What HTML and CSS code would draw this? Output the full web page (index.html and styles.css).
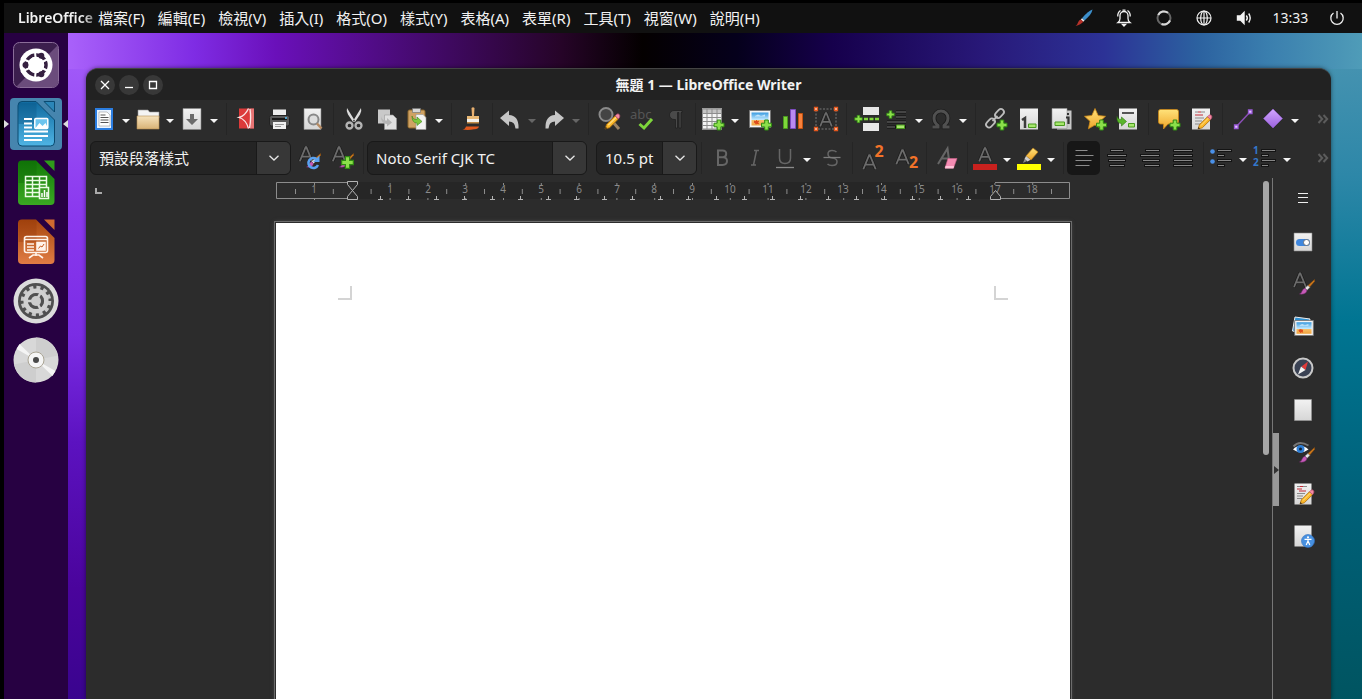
FILE: index.html
```html
<!DOCTYPE html>
<html lang="zh-Hant">
<head>
<meta charset="utf-8">
<title>無題 1 — LibreOffice Writer</title>
<link rel="stylesheet" href="styles.css">
</head>
<body>
<svg class="defs" aria-hidden="true">
  <defs>
    <linearGradient id="paper" x1="0" y1="0" x2="0" y2="1"><stop offset="0" stop-color="#f2f2f2"/><stop offset="1" stop-color="#d6d6d6"/></linearGradient>
    <linearGradient id="sky" x1="0" y1="0" x2="0" y2="1"><stop offset="0" stop-color="#3a9be0"/><stop offset=".55" stop-color="#bfe8ff"/><stop offset=".6" stop-color="#f6c06a"/><stop offset="1" stop-color="#f2a33c"/></linearGradient>
    <linearGradient id="gold" x1="0" y1="0" x2="0" y2="1"><stop offset="0" stop-color="#ffe27a"/><stop offset="1" stop-color="#efa62a"/></linearGradient>
    <linearGradient id="folder" x1="0" y1="0" x2="0" y2="1"><stop offset="0" stop-color="#f6e3bd"/><stop offset="1" stop-color="#d8b276"/></linearGradient>
    <linearGradient id="writer" x1="0" y1="0" x2="0" y2="1"><stop offset="0" stop-color="#0f6a9f"/><stop offset="1" stop-color="#4fb4e4"/></linearGradient>
    <linearGradient id="calc" x1="0" y1="0" x2="0" y2="1"><stop offset="0" stop-color="#127a08"/><stop offset="1" stop-color="#3aa822"/></linearGradient>
    <linearGradient id="impress" x1="0" y1="0" x2="0" y2="1"><stop offset="0" stop-color="#a8480f"/><stop offset="1" stop-color="#e07c44"/></linearGradient>
    <linearGradient id="violet" x1="0" y1="0" x2="0" y2="1"><stop offset="0" stop-color="#d3a6ff"/><stop offset="1" stop-color="#9a62dd"/></linearGradient>
    <symbol id="plus" viewBox="0 0 12 12"><path d="M4.200 1h3.600v3.200H11v3.600H7.800V11H4.200V7.800H1V4.200h3.200z" fill="#8be04a" stroke="#2f8a12"/></symbol>
    <symbol id="pencil" viewBox="0 0 16 16"><path d="M1 15l1.400-4.200L10.500 2.700l3 3L5.300 13.800z" fill="#fbb829" stroke="#a96a0a" stroke-width=".8"/><path d="M4 11.500l7.500-7.500" stroke="#ffe08a"/><path d="M10.500 2.700L12 1.200q1.300-.9 2.300.2t.4 2.600L13.500 5.700z" fill="#f48aa4" stroke="#b04a68" stroke-width=".7"/><path d="M1 15l.6-2 1.400 1.400z" fill="#222"/></symbol>
    <symbol id="brush" viewBox="0 0 16 16"><path d="M15.500.500L9 6.500l1.500 1.700L15.500 2.500z" fill="#d07a1c" stroke="#8a4c0c" stroke-width=".5"/><path d="M9 6.500L6 9l2 2.200 2.800-2.800z" fill="#e8e8e8" stroke="#888" stroke-width=".5"/><path d="M6 9.200q-2.200.6-3 3Q2.400 14.500.500 15q4.500.6 6-1 1.400-1.300 1.300-2.800z" fill="#c65bb8" stroke="#7b2f74" stroke-width=".5"/></symbol>
    <symbol id="picture" viewBox="0 0 22 18"><path d="M.500.500h21v17H.500z" fill="#f5f5f5" stroke="#777"/><path d="M2.500 2.500h17v13h-17z" fill="url(#sky)"/><path d="M6 6l3-1.500 3 1.500 4-1.500v2H6z" fill="#e8f7ff" opacity=".7"/><path d="M5.500 11l1.200.6.8-1.300.8 1.300 1.300-.4-.8 1.300.8 1.200-1.700-.4-.8.9-.5-1.200-1.200-.4z" fill="#df4a1c" stroke="#df4a1c"/></symbol>
    <symbol id="letterA" viewBox="0 0 20 22"><path d="M1.500 21L9.500 1.500h1L18.500 21M4.500 14.500h11" fill="none" stroke="#1d1d1d" stroke-width="4.500"/><path d="M1.500 21L9.500 1.500h1L18.500 21M4.500 14.500h11" fill="none" stroke="#6c6c6c" stroke-width="2.500"/></symbol>
    <symbol id="chevron" viewBox="0 0 12 8"><path d="M1.500 1.800L6 6l4.500-4.200" fill="none" stroke="#e6e6e6" stroke-width="1.300"/></symbol>
    <symbol id="more" viewBox="0 0 12 12"><path d="M1.500 2l3.700 4-3.700 4M6.500 2l3.700 4-3.700 4" fill="none" stroke="#5c5c5c" stroke-width="2"/></symbol>
    <pattern id="halves" x="19" width="37.8" height="18" patternUnits="userSpaceOnUse"><path d="M.500 7v5" stroke="#8c8c8c"/></pattern>
    <pattern id="marks" x="38" width="37.8" height="18" patternUnits="userSpaceOnUse"><path d="M.500 1v2M.500 16v2" stroke="#8c8c8c"/></pattern>
    <pattern id="tabs" x="102" width="28" height="20" patternUnits="userSpaceOnUse"><path d="M2.500 14v4M0 17.500h5" stroke="#b4b4b4"/></pattern>
  </defs>
</svg>

<header class="topbar">
  <strong class="app-name">LibreOffice</strong>
  <nav class="menus" aria-label="選單">
    <button>檔案(F)</button><button>編輯(E)</button><button>檢視(V)</button><button>插入(I)</button><button>格式(O)</button><button>樣式(Y)</button><button>表格(A)</button><button>表單(R)</button><button>工具(T)</button><button>視窗(W)</button><button>說明(H)</button>
  </nav>
  <div class="tray">
    <button aria-label="畫筆"><svg viewBox="0 0 20 20"><path d="M18.500 1.500q-.5 4.500-8 11l-2.500-2.300Q14.500 2.500 18.500 1.500z" fill="#3d8fcb"/><path d="M8 10.200l2.500 2.300-1.200 1.300L6.800 11.500z" fill="#e8e8e8"/><path d="M6.800 11.400l2.500 2.300Q7 16.500 1.500 18q2-1.500 2.500-3.600.8-2.500 2.800-3z" fill="#b8322a"/></svg></button>
    <button aria-label="通知"><svg viewBox="0 0 20 20" fill="none" stroke="#f2f2f2" stroke-width="1.300"><path d="M4 14.500q2-1.500 2-4V7.500a4 4 0 0 1 8 0v3q0 2.500 2 4z"/><path d="M8.500 16.500h3L10 18z" fill="#f2f2f2"/><path d="M3.800 8.500q-.3-4 2.700-6M16.200 8.500q.3-4-2.700-6M8.500 2.200h3"/></svg></button>
    <button aria-label="進度"><svg viewBox="0 0 20 20" fill="none" stroke-width="2"><circle cx="10" cy="10" r="6.500" stroke="#666"/><path d="M4.200 7a6.500 6.500 0 0 1 9.800-2.200M16 12.500a6.500 6.500 0 0 1-8.500 3.500" stroke="#d8d8d8"/></svg></button>
    <button aria-label="網路"><svg viewBox="0 0 20 20" fill="none" stroke="#f2f2f2" stroke-width="1.200"><circle cx="10" cy="10" r="7"/><ellipse cx="10" cy="10" rx="3.300" ry="7"/><path d="M10 3v14M3 10h14"/></svg></button>
    <button aria-label="音量"><svg viewBox="0 0 20 20" fill="none" stroke="#f2f2f2" stroke-width="1.400"><path d="M3.500 8h3l3.500-3.500v11L6.500 12h-3z" fill="#f2f2f2"/><path d="M12.300 7.500q2 2.500 0 5M14.700 5.500q3 4.500 0 9"/></svg></button>
    <button class="clock">13:33</button>
    <button aria-label="電源"><svg viewBox="0 0 20 20" fill="none" stroke="#f2f2f2" stroke-width="1.300"><path d="M6.500 5a6.200 6.200 0 1 0 7 0M10 3v7.500"/></svg></button>
  </div>
</header>

<div class="desktop">
  <nav class="dock" aria-label="啟動列">
    <button aria-label="應用程式"><svg viewBox="0 0 46 46"><rect x=".5" y=".5" width="45" height="45" rx="6" fill="#3c1f4e" stroke="#8a6d99"/><path d="M45 3v37q0 5-5 5H3z" fill="#6b4c7c"/><circle cx="23" cy="23" r="16.500" fill="#fff"/><circle cx="23" cy="23" r="10" fill="none" stroke="#352040" stroke-width="3.500"/><path d="M23 23L8 16M23 23L8 30M23 23L22 9M23 23l12-6M23 23l-1 14M23 23l12 6" stroke="#fff" stroke-width="2"/><circle cx="23" cy="23" r="8.200" fill="#fff"/><circle cx="12.500" cy="23" r="3" fill="#352040"/><circle cx="28.300" cy="13.800" r="3" fill="#352040"/><circle cx="28.300" cy="32.200" r="3" fill="#352040"/></svg></button>
    <button class="active" aria-label="LibreOffice Writer"><svg viewBox="0 0 46 46"><path d="M9 .500h14L41.500 19v22q0 4-4 4H9q-4 0-4-4V4.500q0-4 4-4z" fill="url(#writer)" stroke="#0b4a70"/><path d="M5.500 2h18v21h-18z" fill="#074d7c" opacity=".3"/><path d="M31 .500h10.500V11z" fill="#2b86b8" stroke="#0b4a70"/><path d="M11 18h8M11 22.500h8M11 26.500h8M11 30.500h24M11 35h24M11 39h18" stroke="#fff" stroke-width="2"/><rect x="21.800" y="17.500" width="13" height="10" rx="1" fill="#6cc4ee" stroke="#fff" stroke-width="1.500"/><path d="M22.500 27l4-5 3 3 3-3 2.500 5z" fill="#fff"/></svg></button>
    <button aria-label="LibreOffice Calc"><svg viewBox="0 0 46 46"><path d="M9 .500h14L41.500 19v22q0 4-4 4H9q-4 0-4-4V4.500q0-4 4-4z" fill="url(#calc)"/><path d="M5.500 1h18v22h-18z" fill="#085c04" opacity=".25"/><path d="M31 .500h10.500V11z" fill="#2f9c1a"/><g fill="none" stroke="#eafbe4" stroke-width="1.500"><path d="M12.500 16.500h21v20h-21zM12.500 20.500h21M12.500 24.500h21M12.500 28.500h21M12.500 32.500h21M19.500 16.500v20M26.500 16.500v20"/><path d="M26.500 27.500h9v11h-9z" fill="#3a9c24"/></g><path d="M29 37v-4M31.500 37v-7M34 37v-5" stroke="#fff" stroke-width="1.500"/></svg></button>
    <button aria-label="LibreOffice Impress"><svg viewBox="0 0 46 46"><path d="M9 .500h14L41.500 19v22q0 4-4 4H9q-4 0-4-4V4.500q0-4 4-4z" fill="url(#impress)"/><path d="M5.500 1h18v22h-18z" fill="#862c05" opacity=".25"/><path d="M31 .500h10.500V11z" fill="#d06a30"/><g fill="none" stroke="#fff3ea" stroke-width="1.600"><rect x="11.500" y="17.500" width="23" height="16" rx="2"/><path d="M11 20.500h24M14 25h7M14 28h7M14 31h7M23 34v3M16 39l4-3h6l4 3"/><rect x="24" y="23.500" width="8" height="7.500" fill="#fff3ea"/></g><path d="M25.500 29.500l2-2.500 1.500 1 2-3" fill="none" stroke="#c85c20"/></svg></button>
    <button aria-label="設定"><svg viewBox="0 0 46 46"><circle cx="23" cy="23" r="22.500" fill="#dcdcdc"/><circle cx="23" cy="23" r="18" fill="#505050"/><circle cx="23" cy="23" r="13.500" fill="none" stroke="#c9c9c9" stroke-width="3.500" stroke-dasharray="4 3.070"/><circle cx="23" cy="23" r="10.300" fill="none" stroke="#d0d0d0" stroke-width="4.500"/><circle cx="23" cy="23" r="7.800" fill="#505050"/><path d="M23 23H14M23 23l4.500-8M23 23l4.500 8" stroke="#d0d0d0" stroke-width="2.500"/><circle cx="23" cy="23" r="5" fill="#ccc"/></svg></button>
    <button aria-label="光碟"><svg viewBox="0 0 46 46"><circle cx="23" cy="23" r="22.500" fill="#d8d8d8"/><path d="M23 23L23 .500a22.500 22.500 0 0 1 22 18zM23 23v22.500a22.500 22.500 0 0 1-22-18z" fill="#cecece"/><path d="M23 23L3.500 12l3-5zM23 23l19.500 11-3 5z" fill="#f4f4f4"/><circle cx="23" cy="23" r="8" fill="#f5f5f5" stroke="#aaa494"/><circle cx="23" cy="23" r="3" fill="#494949"/></svg></button>
  </nav>

  <main class="window">
    <div class="titlebar">
      <div class="controls">
        <button aria-label="關閉"><svg viewBox="0 0 20 20"><path d="M6 6l8 8M14 6l-8 8"/></svg></button>
        <button aria-label="最小化"><svg viewBox="0 0 20 20"><path d="M6 12.500h8"/></svg></button>
        <button aria-label="最大化"><svg viewBox="0 0 20 20"><path d="M6.500 6.500h7v7h-7z"/></svg></button>
      </div>
      <h1>無題 1 — LibreOffice Writer</h1>
    </div>

    <div class="toolbar standard">
      <button class="tool split" aria-label="開新檔案"><svg viewBox="0 0 24 24"><path d="M4 2h16v20H4z" fill="#e9f3ff" stroke="#2b7de0" stroke-width="2"/><path d="M7 5h8l3 3v11H7z" fill="#fff" stroke="#999" stroke-width=".6"/><path d="M8.500 8h5M8.500 10.500h8M8.500 13h8M8.500 15.500h8" stroke="#555"/></svg></button><button class="drop" aria-label="範本"></button>
      <button class="tool split" aria-label="開啟舊檔"><svg viewBox="0 0 24 24"><path d="M2 3h10l1.500 2H23v6H2z" fill="#f4f4f4" stroke="#999" stroke-width=".6"/><path d="M1 9h22v13H1z" fill="url(#folder)" stroke="#b58d50" stroke-width=".6"/></svg></button><button class="drop" aria-label="最近的檔案"></button>
      <button class="tool split" aria-label="儲存"><svg viewBox="0 0 24 24"><path d="M3 1.500h18v21H3z" fill="url(#paper)" stroke="#888" stroke-width=".6"/><path d="M10 7h4v5h4l-6 6-6-6h4z" fill="#6b6b6b"/></svg></button><button class="drop" aria-label="另存新檔"></button>
      <i class="sep"></i>
      <button class="tool" aria-label="匯出為 PDF"><svg viewBox="0 0 24 24"><path d="M4 1.500h15v20H4z" fill="#dc3a3a"/><path d="M14.500 1.500H19v20h-4z" fill="#ee9a9a" opacity=".6"/><path d="M13.500 1.500Q10 9 4 10.500q7 2 9.500 11M15 2q1.500 9-.5 19" fill="none" stroke="#fbe6e6" stroke-width="1.300"/></svg></button>
      <button class="tool" aria-label="列印"><svg viewBox="0 0 24 24"><path d="M5 2.500h13v9H5z" fill="#ececec"/><rect x="1.500" y="8.500" width="20" height="10.500" rx="2" fill="#585858" stroke="#222"/><path d="M4 12h15" stroke="#181818" stroke-width="2"/><path d="M17 11h2" stroke="#5dc8ff" stroke-width="1.500"/><path d="M5 15h13v7H5z" fill="#f0f0f0"/><path d="M7 17.500h9M7 19.500h6" stroke="#999"/></svg></button>
      <button class="tool" aria-label="預覽列印"><svg viewBox="0 0 24 24"><path d="M3 1.500h17v21H3z" fill="url(#paper)" stroke="#888" stroke-width=".6"/><circle cx="12.500" cy="12.500" r="5" fill="#ddd" stroke="#888" stroke-width="2"/><path d="M16 16.500l4.500 5" stroke="#b78b62" stroke-width="2.500"/></svg></button>
      <i class="sep"></i>
      <button class="tool" aria-label="剪下"><svg viewBox="0 0 24 24"><path d="M5 1q-1 3 1 6.500L11 15l2-1zM19 1q1 3-1 6.500L13 15l-2-1z" fill="#dcdcdc"/><g fill="none" stroke="#b4b4b4" stroke-width="2.300"><circle cx="7.500" cy="18.500" r="3"/><circle cx="16.500" cy="18.500" r="3"/></g></svg></button>
      <button class="tool" aria-label="複製"><svg viewBox="0 0 24 24"><path d="M3 2.500h12v14H3z" fill="#c9c9c9"/><path d="M9.500 8H18l3.500 3.500v11h-12z" fill="#e0e0e0" stroke="#999" stroke-width=".6"/><path d="M6 9q1 5 6 4.500V11l5 4.500-5 4V17q-6 0-6-8z" fill="#b4b4b4"/></svg></button>
      <button class="tool split" aria-label="貼上"><svg viewBox="0 0 24 24"><rect x="3" y="3" width="17" height="18" rx="1.500" fill="#cfa263" stroke="#8b6428"/><path d="M7.500 1.500h8v4h-8z" fill="#d8d8d8" stroke="#777" stroke-width=".7"/><path d="M11 7.500h7l3 3V22.500H11z" fill="#f2f2f2" stroke="#999" stroke-width=".6"/><path d="M7 9q1 4 5 3.500V10l5 4.500-5 4V16q-5 0-5-7z" fill="#7cc83c" stroke="#3e861a" stroke-width=".6"/></svg></button><button class="drop" aria-label="貼上選項"></button>
      <i class="sep"></i>
      <button class="tool" aria-label="複製格式"><svg viewBox="0 0 24 24"><path d="M11.500 1q1.500-1.500 3 0L14 9h-2z" fill="#e8b070"/><path d="M7 9h12v4H7z" fill="#e8b875"/><path d="M7 12h12v3H7z" fill="#f3f0ea"/><path d="M7 15h12v1.500H7z" fill="#c08a46"/><path d="M2 22.500q3 .3 4-3h13q-1 3-5 2.700-5 1.200-12 .3z" fill="#e0581d"/></svg></button>
      <i class="sep"></i>
      <button class="tool split" aria-label="復原"><svg viewBox="0 0 24 24"><path d="M2 11l9-7.500v4.500q10 .5 9.500 13.500h-3Q17 14.500 11 14.500v4.500z" fill="#c6c6c6"/></svg></button><button class="drop off" aria-label="復原清單"></button>
      <button class="tool split" aria-label="取消復原"><svg viewBox="0 0 24 24"><path d="M22 11l-9-7.500v4.500Q3 8.500 3.500 21.500h3Q7 14.500 13 14.500v4.500z" fill="#c6c6c6"/></svg></button><button class="drop off" aria-label="取消復原清單"></button>
      <i class="sep"></i>
      <button class="tool" aria-label="尋找與取代"><svg viewBox="0 0 24 24"><circle cx="9" cy="7.500" r="6.500" fill="#444" stroke="#8a8a8a" stroke-width="2"/><path d="M15 14l7 8" stroke="#9a8264" stroke-width="3"/><use href="#pencil" x="7" y="6" width="17" height="17"/></svg></button>
      <button class="tool" aria-label="拼字檢查"><svg viewBox="0 0 24 24"><text x="0" y="12" class="glyph abc">abc</text><path d="M9.500 17l4.500 4 8-9" fill="none" stroke="#7ed63b" stroke-width="3"/></svg></button>
      <button class="tool" aria-label="格式化標記"><svg viewBox="0 0 24 24"><path d="M19 3.500H11a4.500 4.500 0 0 0 0 9h1.500V21h2V5.500H16V21h2V5.500h1z" fill="#4a4a4a" stroke="#1c1c1c" stroke-width=".7"/></svg></button>
      <i class="sep"></i>
      <button class="tool split" aria-label="插入表格"><svg viewBox="0 0 24 24"><path d="M1 1.500h20v21H1z" fill="#f4f4f4"/><path d="M1 1.500h20v5H1z" fill="#c4c4c4"/><path d="M1 2h20M1 6.500h20M1 10.500h20M1 14.500h20M1 18.500h20M1 22h20M1.500 2v20M6 2v20M11 2v20M16 2v20M20.500 2v20" stroke="#8d8d8d"/><use href="#plus" x="12" y="12" width="12" height="12"/></svg></button><button class="drop" aria-label="表格選項"></button>
      <button class="tool" aria-label="插入圖片"><svg viewBox="0 0 24 24"><use href="#picture" x="1" y="3" width="22" height="18"/><use href="#plus" x="12.500" y="12" width="12" height="12"/></svg></button>
      <button class="tool" aria-label="插入圖表"><svg viewBox="0 0 24 24"><path d="M2.500 9.500h4v12h-4z" fill="#7ed63b" stroke="#4a9a1e"/><path d="M9.500 2.500h5v19h-5z" fill="#b98af0" stroke="#7d4cc0"/><path d="M17.500 6.500h4v15h-4z" fill="#f8813c" stroke="#c4520f"/></svg></button>
      <button class="tool" aria-label="插入文字方塊"><svg viewBox="0 0 24 24"><path d="M2 2h20v20H2z" fill="none" stroke="#777" stroke-dasharray="2 1.500"/><use href="#letterA" x="5" y="5" width="14" height="15"/><path d="M.500.500h3v3h-3zM20.500.500h3v3h-3zM.500 20.500h3v3h-3zM20.500 20.500h3v3h-3z" fill="#ffd8c6" stroke="#e2571e" stroke-width="1.300"/></svg></button>
      <i class="sep"></i>
      <button class="tool" aria-label="插入分頁"><svg viewBox="0 0 24 24"><path d="M8 0h16v8H8zM8 16h16v8H8z" fill="#e8e8e8"/><path d="M9 12h15" stroke="#7ed63b" stroke-width="2.500" stroke-dasharray="4 1.500"/><use href="#plus" x="-1" y="7.500" width="9" height="9"/></svg></button>
      <button class="tool split" aria-label="插入欄位"><svg viewBox="0 0 24 24"><path d="M11 5h10M11 10h10M2 15h19M2 20h19" stroke="#111" stroke-width="3"/><path d="M11 5h10M11 10h10M2 15h19M2 20h8" stroke="#7a7a7a"/><path d="M11.500 18h8v3.500h-8z" fill="#a6e66d" stroke="#4a9a1e"/><use href="#plus" x="1" y="3" width="9" height="9"/></svg></button><button class="drop" aria-label="欄位選項"></button>
      <button class="tool split" aria-label="插入特殊字元"><svg viewBox="0 0 24 24"><path d="M3.500 20h5.500v-1.500Q5 15.500 5 11a7 7 0 0 1 14 0q0 4.500-4 7.500V20h5.500" fill="none" stroke="#1b1b1b" stroke-width="4.500"/><path d="M3.500 20h5.500v-1.500Q5 15.500 5 11a7 7 0 0 1 14 0q0 4.500-4 7.500V20h5.500" fill="none" stroke="#505050" stroke-width="3"/></svg></button><button class="drop" aria-label="特殊字元選項"></button>
      <i class="sep"></i>
      <button class="tool" aria-label="插入超連結"><svg viewBox="0 0 24 24"><g fill="none" stroke="#bdbdbd" stroke-width="1.800"><rect x="-5" y="-3" width="10" height="6" rx="3" transform="translate(15.500 6.500) rotate(-45)"/><rect x="-5" y="-3" width="10" height="6" rx="3" transform="translate(6.500 16) rotate(-45)"/><path d="M8.500 14l5-5"/></g><use href="#plus" x="12" y="12" width="12" height="12"/></svg></button>
      <button class="tool" aria-label="插入註腳"><svg viewBox="0 0 24 24"><path d="M3 1.500h18v21H3z" fill="url(#paper)"/><path d="M5 13l3-2v10" fill="none" stroke="#3b3b3b" stroke-width="2.500"/><path d="M11.500 17h7.500v3.500h-7.500z" fill="#a6e66d" stroke="#4a9a1e"/></svg></button>
      <button class="tool" aria-label="插入尾註"><svg viewBox="0 0 24 24"><path d="M7 3.500h14.500v19H7z" fill="#c8c8c8"/><path d="M2 1.500h15v20H2z" fill="url(#paper)" stroke="#999" stroke-width=".6"/><path d="M17 7h2M16 10.500h2.500V17" fill="none" stroke="#333" stroke-width="2.200"/><path d="M5 15h9.500v3.500H5z" fill="#a6e66d" stroke="#4a9a1e"/></svg></button>
      <button class="tool" aria-label="插入書籤"><svg viewBox="0 0 24 24"><path d="M12 1.500l3.200 7 7.300.8-5.500 5 1.600 7.500L12 18l-6.600 3.800L7 14.300l-5.500-5 7.300-.8z" fill="url(#gold)" stroke="#c98716" stroke-width=".8"/><use href="#plus" x="12.500" y="12" width="12" height="12"/></svg></button>
      <button class="tool" aria-label="插入交互參照"><svg viewBox="0 0 24 24"><path d="M3 1.500h18v21H3z" fill="url(#paper)"/><path d="M6 6h12" stroke="#555" stroke-width="2"/><path d="M12.500 16.500h6v3.500h-6z" fill="#a6e66d" stroke="#4a9a1e"/><path d="M1 9.500q1 3.500 4.500 3V10l5 4.500-5 4.500v-2.500Q.500 16.500 1 9.500z" fill="#5ab52c" stroke="#2f7a10" stroke-width=".6"/></svg></button>
      <i class="sep"></i>
      <button class="tool" aria-label="插入註解"><svg viewBox="0 0 24 24"><path d="M3.500 2.500h16q2 0 2 2V15q0 2-2 2H11l-4.500 5V17h-3q-2 0-2-2V4.500q0-2 2-2z" fill="url(#gold)" stroke="#c98716" stroke-width=".8"/><use href="#plus" x="12" y="12" width="12" height="12"/></svg></button>
      <button class="tool" aria-label="追蹤修訂"><svg viewBox="0 0 24 24"><path d="M2 1.500h18v21H2z" fill="url(#paper)"/><path d="M5 5h3M11 5h4M5 11h9M5 14h7M5 17h6" stroke="#8a8a8a"/><path d="M8 5h3M5 8h8" stroke="#c42a36" stroke-width="1.200"/><use href="#pencil" x="7" y="7" width="16" height="16"/></svg></button>
      <i class="sep"></i>
      <button class="tool" aria-label="插入線條"><svg viewBox="0 0 24 24"><path d="M5 20L20 4" stroke="#8c50b8" stroke-width="1.500"/><path d="M3.500 18h3.500v3.500H3.500zM17.500 3h3.500v3.500h-3.500z" fill="#e2c4ff" stroke="#9a5ad8" stroke-width="1.300"/></svg></button>
      <button class="tool split" aria-label="基本圖形"><svg viewBox="0 0 24 24"><path d="M12 2l9.500 9.500-9.500 9.500-9.500-9.500z" fill="url(#violet)" stroke="#9a62dd" stroke-width=".5"/></svg></button><button class="drop" aria-label="圖形選項"></button>
      <button class="overflow" aria-label="更多"><svg viewBox="0 0 12 12"><use href="#more"/></svg></button>
    </div>

    <div class="toolbar formatting">
      <div class="combo style"><select aria-label="段落樣式"><option>預設段落樣式</option></select><span class="arrow"><svg viewBox="0 0 12 8"><use href="#chevron"/></svg></span></div>
      <button class="tool" aria-label="更新樣式"><svg viewBox="0 0 24 24"><use href="#letterA" x="0" y="0" width="16" height="16"/><use href="#brush" x="8" y="7" width="15" height="15"/><path d="M18.500 13a5 5 0 1 0 1.500 6" fill="none" stroke="#5aa2f2" stroke-width="2.500"/><path d="M21.500 9.500v6.500H15z" fill="#5aa2f2"/></svg></button>
      <button class="tool" aria-label="新增樣式"><svg viewBox="0 0 24 24"><use href="#letterA" x="0" y="0" width="16" height="16"/><use href="#brush" x="8" y="7" width="15" height="15"/><use href="#plus" x="9.500" y="9.500" width="14" height="14"/></svg></button>
      <i class="sep"></i>
      <div class="combo font"><select aria-label="字型名稱"><option>Noto Serif CJK TC</option></select><span class="arrow"><svg viewBox="0 0 12 8"><use href="#chevron"/></svg></span></div>
      <div class="combo size"><select aria-label="字型大小"><option>10.5 pt</option></select><span class="arrow"><svg viewBox="0 0 12 8"><use href="#chevron"/></svg></span></div>
      <i class="sep"></i>
      <button class="tool" aria-label="粗體"><svg viewBox="0 0 24 24"><path d="M8 4.500v14.500h4.500q4.500-.3 4.500-4t-4-3.700q3.200-.3 3.200-3.500T12.500 4.500zM8 11.300h5" class="letter"/></svg></button>
      <button class="tool" aria-label="斜體"><svg viewBox="0 0 24 24"><path d="M11 4.500h5M8 19h5M13.500 4.500l-3 14.500" class="letter thin"/></svg></button>
      <button class="tool split" aria-label="底線"><svg viewBox="0 0 24 24"><path d="M6.500 3v9q0 5.500 5.500 5.500T17.500 12V3" class="letter thin"/><path d="M3 21.500h18" stroke="#8a8a8a" stroke-width="1.300"/></svg></button><button class="drop" aria-label="底線選項"></button>
      <button class="tool" aria-label="刪除線"><svg viewBox="0 0 24 24"><path d="M16.500 6q-1.500-1.500-4.500-1.500-4 0-4 3.500t4.500 4 4.500 3.700q0 3.800-5 3.800-3 0-4.500-1.500" class="letter thin"/><path d="M3.500 11.500h17" stroke="#7c7c7c" stroke-width="1.300"/></svg></button>
      <i class="sep"></i>
      <button class="tool" aria-label="上標"><svg viewBox="0 0 24 24"><use href="#letterA" x="1" y="8" width="15" height="16"/><text x="13.500" y="11" class="glyph digit">2</text></svg></button>
      <button class="tool" aria-label="下標"><svg viewBox="0 0 24 24"><use href="#letterA" x="1" y="3" width="15" height="16"/><text x="15" y="22" class="glyph digit">2</text></svg></button>
      <i class="sep"></i>
      <button class="tool" aria-label="清除格式"><svg viewBox="0 0 24 24"><path d="M3 18L12.500 2.500l2 15.500M6.500 12.500h8" class="letter"/><path d="M13 12.500h9L18.500 22H10z" fill="#f48bb2" stroke="#d2638d" stroke-width=".6"/><path d="M10.500 20h8.500l-.5 2.500H10z" fill="#ffc2d8"/></svg></button>
      <i class="sep"></i>
      <button class="tool split" aria-label="字型色彩"><svg viewBox="0 0 24 24"><use href="#letterA" x="5" y="1" width="14" height="15"/><path d="M0 18h24v6H0z" fill="#c9211e"/></svg></button><button class="drop" aria-label="字型色彩選項"></button>
      <button class="tool split" aria-label="醒目提示色彩"><svg viewBox="0 0 24 24"><path d="M16 2l5 4-7 8-5-4z" fill="url(#gold)" stroke="#b47a16" stroke-width=".7"/><path d="M9 10l4.500 3.800-3 1.700-3-2.500z" fill="#d0d0d0"/><path d="M7.500 13l2.500 2-4 2z" fill="#888"/><path d="M0 18h24v6H0z" fill="#ff0"/></svg></button><button class="drop" aria-label="醒目提示選項"></button>
      <i class="sep"></i>
      <button class="tool pressed" aria-label="靠左對齊" aria-pressed="true"><svg viewBox="0 0 24 24"><path d="M3.500 4.500h12M3.500 9.500h18M3.500 14.500h16M3.500 19.500h14" stroke="#8c8c8c"/></svg></button>
      <button class="tool" aria-label="置中對齊"><svg viewBox="0 0 24 24"><path d="M5 4.500h14M2 9.500h20M3 14.500h18M4 19.500h16" class="rule-back"/><path d="M6 4.500h12M3 9.500h18M4 14.500h16M5 19.500h14" class="rule"/></svg></button>
      <button class="tool" aria-label="靠右對齊"><svg viewBox="0 0 24 24"><path d="M7 4.500h15M2 9.500h20M4 14.500h18M6 19.500h16" class="rule-back"/><path d="M8 4.500h13M3 9.500h18M5 14.500h16M7 19.500h14" class="rule"/></svg></button>
      <button class="tool" aria-label="左右對齊"><svg viewBox="0 0 24 24"><path d="M2 4.500h20M2 9.500h20M2 14.500h20M2 19.500h20" class="rule-back"/><path d="M3 4.500h18M3 9.500h18M3 14.500h18M3 19.500h18" class="rule"/></svg></button>
      <i class="sep"></i>
      <button class="tool split" aria-label="項目符號"><svg viewBox="0 0 24 24"><path d="M8 4.500h15M8 9.500h8M8 14.500h15M8 19.500h8" class="rule-back"/><path d="M9 4.500h13M9 9.500h6M9 14.500h13M9 19.500h6" class="rule"/><circle cx="3.500" cy="5.500" r="2.300" fill="#4a90e8"/><circle cx="3.500" cy="15.500" r="2.300" fill="#4a90e8"/></svg></button><button class="drop" aria-label="項目符號選項"></button>
      <button class="tool split" aria-label="編號"><svg viewBox="0 0 24 24"><path d="M8 4.500h15M8 9.500h8M8 14.500h15M8 19.500h8" class="rule-back"/><path d="M9 4.500h13M9 9.500h6M9 14.500h13M9 19.500h6" class="rule"/><text x="0" y="8" class="glyph list">1</text><text x="0" y="20" class="glyph list">2</text></svg></button><button class="drop" aria-label="編號選項"></button>
      <button class="overflow" aria-label="更多"><svg viewBox="0 0 12 12"><use href="#more"/></svg></button>
    </div>

    <div class="workspace">
      <section class="document">
        <div class="ruler-row">
          <button class="tab-stop" aria-label="定位點"><svg viewBox="0 0 8 8"><path d="M1 1v5h6" fill="none" stroke="#aaa" stroke-width="2"/></svg></button>
          <svg class="ruler" viewBox="0 0 794 20" role="img" aria-label="尺規">
            <path d="M76 0h643v17H76z" fill="#262626"/>
            <path d="M0 0h794v18H0z" fill="url(#halves)"/><path d="M20 0h774v18H20z" fill="url(#marks)"/>
            <path d="M102 0h616v20H102z" fill="url(#tabs)"/>
            <path d="M76 .500H.500v16H76M719 .500h74.500v16H719" fill="none" stroke="#8c8c8c"/>
            <g class="numbers"><text x="38" y="11">1</text><text x="114" y="11">1</text><text x="152" y="11">2</text><text x="189" y="11">3</text><text x="227" y="11">4</text><text x="265" y="11">5</text><text x="303" y="11">6</text><text x="341" y="11">7</text><text x="378" y="11">8</text><text x="416" y="11">9</text><text x="454" y="11">10</text><text x="492" y="11">11</text><text x="530" y="11">12</text><text x="567" y="11">13</text><text x="605" y="11">14</text><text x="643" y="11">15</text><text x="681" y="11">16</text><text x="719" y="11">17</text><text x="756" y="11">18</text></g>
            <g fill="#2c2c2c" stroke="#b4b4b4"><path d="M71.500-.5h10v3l-5 6-5-6zM76.500 8.500l5 6v3h-10v-3zM719.500 8.500l5 6v3h-10v-3z"/></g>
          </svg>
        </div>
        <div class="page" contenteditable="true" role="textbox" aria-label="文件"><span class="corner left"></span><span class="corner right"></span></div>
      </section>
      <div class="scrollbar"><span class="thumb"></span></div>
      <div class="splitter"><button aria-label="隱藏側邊欄"></button></div>
      <aside class="sidebar" aria-label="側邊欄">
        <button class="menu" aria-label="側邊欄設定"><svg viewBox="0 0 24 24"><path d="M7 7.500h10M7 11.500h10M7 16.500h10" stroke="#eee"/></svg></button>
        <button aria-label="屬性"><svg viewBox="0 0 24 24"><path d="M3 3h18v18H3z" fill="url(#paper)" stroke="#888" stroke-width=".6"/><rect x="5" y="9" width="14" height="7" rx="3.500" fill="#3f87de"/><circle cx="15.500" cy="12.500" r="3" fill="#fff" stroke="#555" stroke-width=".7"/></svg></button>
        <button aria-label="樣式"><svg viewBox="0 0 24 24"><use href="#letterA" x="2" y="0" width="14" height="16"/><use href="#brush" x="8" y="7" width="16" height="16"/></svg></button>
        <button aria-label="圖庫"><svg viewBox="0 0 24 24"><path d="M4 3l15 2-3 15L1.500 17z" fill="#2f8fd0" stroke="#eee"/><use href="#picture" x="3" y="6" width="20" height="16"/></svg></button>
        <button aria-label="導覽"><svg viewBox="0 0 24 24"><circle cx="12" cy="12" r="9.500" fill="#3a4254" stroke="#c9c9c9" stroke-width="2"/><path d="M17 5.500L14.500 14l-4-3.500z" fill="#e03a3a"/><path d="M7 18.500l3-8 4.500 3.500z" fill="#f2f2f2"/></svg></button>
        <button aria-label="頁面"><svg viewBox="0 0 24 24"><path d="M3.500 1.500h17v21h-17z" fill="url(#paper)" stroke="#999" stroke-width=".6"/></svg></button>
        <button aria-label="樣式檢查器"><svg viewBox="0 0 24 24"><path d="M2.500 6.500Q8 0 17.500 5.500" fill="none" stroke="#777" stroke-width="2"/><path d="M2 9.500Q9 2 17.500 9.500 10 15 2 9.500z" fill="#fff"/><circle cx="9.500" cy="9" r="4" fill="#2f7fd6"/><circle cx="9.500" cy="9" r="1.500" fill="#123"/><use href="#brush" x="8" y="7" width="16" height="16"/></svg></button>
        <button aria-label="修訂管理"><svg viewBox="0 0 24 24"><path d="M3.500 1.500h17v21h-17z" fill="url(#paper)"/><path d="M6 4.500h3M12 4.500h4M6 11.500h8M6 14h6M6 16.500h5" stroke="#8a8a8a"/><path d="M9 4.500h3M6 7h5M8 9h7" stroke="#c42a36" stroke-width="1.200"/><use href="#pencil" x="8" y="7" width="16" height="16"/></svg></button>
        <button aria-label="無障礙檢查"><svg viewBox="0 0 24 24"><path d="M3.500 1.500h17v21h-17z" fill="url(#paper)"/><circle cx="17" cy="17" r="6.500" fill="#4790e0" stroke="#2f6fc0" stroke-width=".6"/><circle cx="17" cy="13.300" r="1.100" fill="#fff"/><path d="M13.500 15.300h7M17 15v3M17 17l-1.800 4M17 17l1.800 4" stroke="#fff" stroke-width="1.200" fill="none"/></svg></button>
      </aside>
    </div>
  </main>
</div>
</body>
</html>
```

FILE: styles.css
```css
* { box-sizing: border-box; }

html, body { height: 100%; margin: 0; }

body {
  display: flex;
  flex-direction: column;
  padding-left: 4px;
  overflow: hidden;
  background: #000;
  color: #f2f2f2;
  font: 15px/20px "Noto Sans", "Noto Sans CJK TC", sans-serif;
}

button {
  display: flex;
  align-items: center;
  justify-content: center;
  flex: none;
  margin: 0;
  padding: 0;
  border: 0;
  background: none;
  color: inherit;
  font: inherit;
}

svg { flex: none; overflow: visible; }
.defs { position: absolute; width: 0; height: 0; }

/* Top panel */
.topbar {
  display: flex;
  align-items: center;
  flex: none;
  height: 33px;
  padding: 0 5px 0 14px;
  border-top: 3px solid #000;
  background: #111;
}
.app-name {
  min-width: 80px;
  font-size: 14px;
  font-weight: 600;
  white-space: nowrap;
  mask-image: linear-gradient(to right, #000 80%, rgba(0, 0, 0, .3));
}
.menus { display: flex; gap: 13px; white-space: nowrap; }
.tray { display: flex; margin-left: auto; }
.tray button { width: 40px; height: 30px; }
.tray svg { width: 20px; height: 20px; }
.tray .clock { width: 53px; font-size: 14px; }

/* Desktop and dock */
.desktop {
  display: flex;
  flex: 1;
  min-height: 0;
  background:
    linear-gradient(#a058f8, #8a38ee 22%, #7a2ce4 40%, #5c12c0 56%, #4a049c 78%, #34048a) 64px 36px / 20px 100% no-repeat,
    linear-gradient(#4492b0, #2d87a8 16%, #007592 38%, #006078 66%, #00525c) right 36px / 34px 100% no-repeat,
    linear-gradient(90deg, #a860fa 5%, #7f2ce4 14%, #6a10ba 20%, #440a6c 31%, #260428 41%, #040000 47%, #05001c 54%, #16004c 61%, #281878 72%, #2c3296 81%, #2c62a0 88%, #3a7eae 93%, #4f9cb8);
}
.dock {
  display: flex;
  flex: none;
  flex-direction: column;
  align-items: center;
  gap: 7px;
  width: 64px;
  padding-top: 6px;
  background: #270142;
}
.dock button { position: relative; width: 52px; height: 52px; border-radius: 4px; }
.dock svg { width: 46px; height: 46px; }
.dock .active { background: #4685ae; }
.dock .active::before, .dock .active::after {
  content: "";
  position: absolute;
  top: 22px;
  border: 4px solid transparent;
}
.dock .active::before { left: -6px; border-left: 5px solid #ddd; border-right: 0; }
.dock .active::after { right: -6px; border-right: 5px solid #ddd; border-left: 0; }

/* Application window */
.window {
  display: flex;
  flex: 1;
  flex-direction: column;
  min-width: 0;
  margin: 35px 31px 0 18px;
  border-top: 1px solid #444;
  border-radius: 12px 12px 0 0;
  background: #2c2c2c;
  box-shadow: 0 0 4px rgba(0, 0, 0, .5);
}
.titlebar {
  display: grid;
  grid-template-columns: 1fr auto 1fr;
  align-items: center;
  flex: none;
  height: 31px;
  padding: 0 9px;
  border-radius: 12px 12px 0 0;
  background: #222;
}
.controls { display: flex; gap: 4px; }
.controls button { width: 20px; height: 20px; border-radius: 50%; background: #383838; }
.controls svg { width: 20px; height: 20px; fill: none; stroke: #fff; stroke-width: 1.3; }
h1 { margin: 0; font-size: 14px; line-height: 20px; font-weight: 700; white-space: nowrap; }

/* Toolbars */
.toolbar { display: flex; align-items: center; flex: none; padding: 0 2px 0 4px; }
.standard { height: 38px; }
.formatting { height: 40px; }
.tool { width: 33px; height: 34px; }
.tool svg { width: 24px; height: 24px; }
.tool.split { width: 28px; }
.tool.pressed { border-radius: 5px; background: #171717; }
.drop { width: 16px; height: 34px; }
.drop::after {
  content: "";
  margin-top: 4px;
  border: 4px solid transparent;
  border-top-color: #f5f5f5;
  border-bottom: 0;
}
.drop.off::after { border-top-color: #666; }
.sep { flex: none; width: 8px; height: 32px; background: linear-gradient(#252525, #252525) center / 1px 100% no-repeat; }
.overflow { width: 12px; height: 34px; margin-left: auto; }
.overflow svg { width: 12px; height: 12px; }

.combo { display: grid; flex: none; height: 34px; }
.combo > * { grid-area: 1 / 1; }
.combo select {
  appearance: none;
  width: 100%;
  margin: 0;
  padding: 0 40px 0 8px;
  border: 1px solid #191919;
  border-radius: 6px;
  background: #242424;
  color: #f2f2f2;
  font: inherit;
}
.combo .arrow {
  display: flex;
  align-items: center;
  justify-content: center;
  justify-self: end;
  width: 34px;
  margin: 1px 1px 1px 0;
  border-left: 1px solid #191919;
  border-radius: 0 5px 5px 0;
  background: #373737;
  pointer-events: none;
}
.combo .arrow svg { width: 12px; height: 8px; }
.style { width: 201px; margin-right: 2px; }
.font { width: 220px; }
.size { width: 101px; margin-left: 9px; }

.letter { fill: none; stroke: #666; stroke-width: 2; }
.letter.thin { stroke-width: 1.5; }
.rule { stroke: #858585; }
.rule-back { stroke: #141414; stroke-width: 3; }
.glyph { font-family: "Noto Sans", sans-serif; }
.abc { fill: #555; font-size: 13px; }
.digit { fill: #f37329; font-size: 16px; font-weight: 700; }
.list { fill: #3478cc; font-size: 10px; font-weight: 700; }

/* Document area */
.workspace { display: flex; flex: 1; min-height: 0; overflow: hidden; }
.document { display: flex; flex: 1; flex-direction: column; align-items: center; min-width: 0; }
.ruler-row { position: relative; display: flex; justify-content: center; width: 100%; padding-top: 4px; }
.tab-stop { position: absolute; left: 9px; top: 9px; }
.tab-stop svg { width: 8px; height: 8px; }
.ruler { width: 794px; height: 20px; }
.numbers { fill: #8a8a8a; font: 10px "Noto Sans", sans-serif; text-anchor: middle; }
.page {
  display: flex;
  flex: none;
  justify-content: space-between;
  width: 796px;
  min-height: 1123px;
  margin-top: 20px;
  padding: 63px 62px;
  border: 1px solid #2c2c2c;
  background: #fff;
  box-shadow: 0 0 0 1px #6c6c6c, 0 0 4px #555;
}
.corner { width: 14px; height: 14px; border: 0 solid #d4d4d4; border-bottom-width: 2px; }
.corner.left { border-right-width: 2px; }
.corner.right { border-left-width: 2px; }

.scrollbar { flex: none; width: 12px; padding: 3px 3px 0; }
.thumb { display: block; height: 274px; border-radius: 3px; background: #a6a6a6; }
.splitter { flex: none; width: 7px; border-left: 1px solid #777; }
.splitter button { width: 6px; height: 73px; margin-top: 255px; background: #999; }
.splitter button::after { content: ""; border: 4px solid transparent; border-left: 5px solid #333; border-right: 0; }
.sidebar { display: flex; flex: none; flex-direction: column; width: 52px; padding-right: 4px; }
.sidebar button { height: 42px; }
.sidebar .menu { height: 40px; margin-bottom: 3px; }
.sidebar svg { width: 24px; height: 24px; }
```
